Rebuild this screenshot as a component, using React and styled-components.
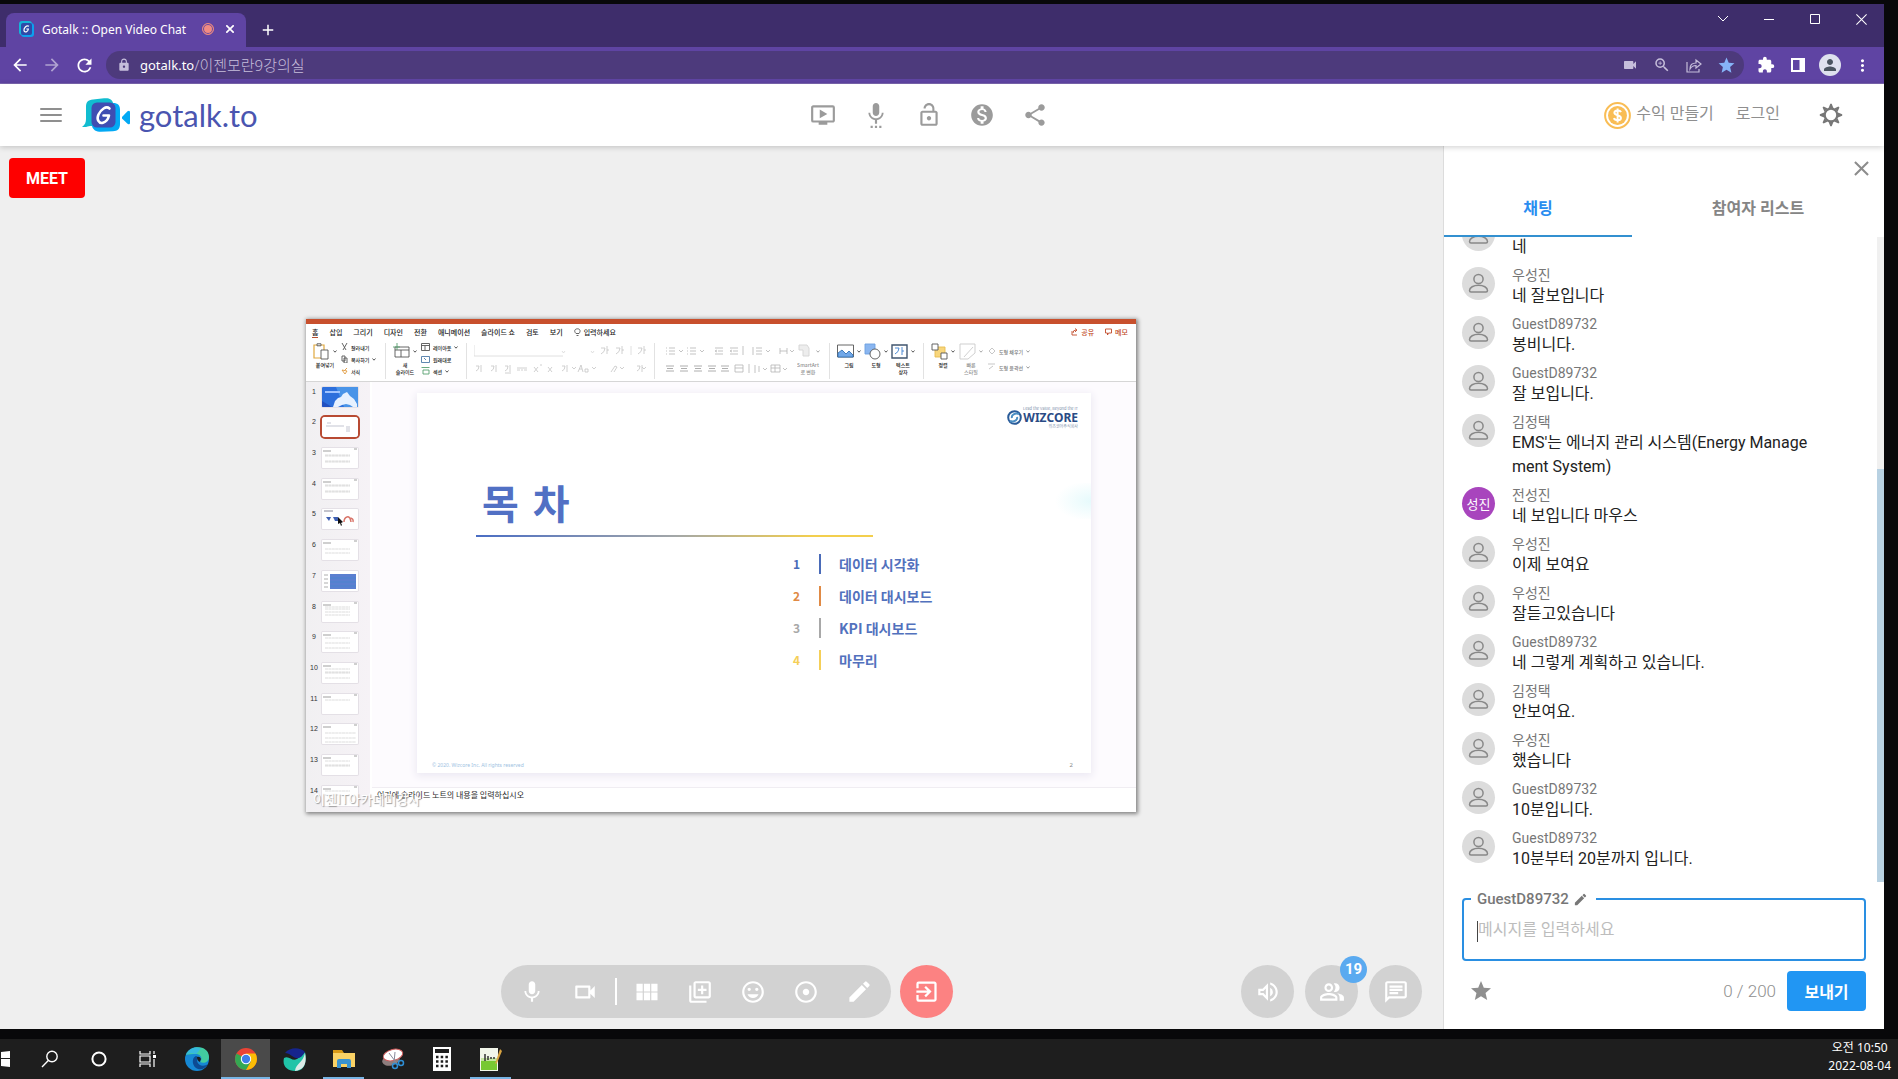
import React from "react";
import styled, { createGlobalStyle } from "styled-components";
import {
  MdOndemandVideo, MdSettingsVoice, MdLockOpen, MdMonetizationOn, MdShare, MdMic, MdOutlineVideocam,
  MdViewModule, MdOutlineLibraryAdd, MdOutlineInsertEmoticon, MdAdjust, MdEdit, MdExitToApp,
  MdOutlineVolumeUp, MdOutlinePeopleAlt, MdOutlineChat, MdStar, MdVideocam, MdZoomIn, MdExtension,
  MdMoreVert, MdArrowBack, MdArrowForward, MdRefresh, MdLock, MdPerson, MdClose, MdAdd,
} from "react-icons/md";

const Global = createGlobalStyle`
  * { box-sizing: border-box; }
  body { margin: 0; background: #08080a; font-family: Roboto, "Noto Sans CJK KR", sans-serif; }
  button { border: 0; padding: 0; background: none; font: inherit; color: inherit; cursor: pointer; }
  input, textarea { font: inherit; }
  svg { display: block; flex: none; }
  h1, p, ul, ol { margin: 0; padding: 0; list-style: none; }
`;

const Desktop = styled.div`
  height: 100vh;
  display: flex;
  flex-direction: column;
  background: #08080a;
  overflow: hidden;
`;
const BrowserWindow = styled.div`
  flex: 1;
  min-height: 0;
  margin: 4px 14px 10px 0;
  display: flex;
  flex-direction: column;
  background: #efefef;
`;

/* ---------- browser chrome ---------- */
const TabStrip = styled.div`
  height: 43px;
  display: flex;
  align-items: flex-end;
  padding-left: 6px;
  background: #3e2d6b;
  color: #fff;
  font-family: "Noto Sans", "Noto Sans CJK KR", sans-serif;
`;
const BrowserTab = styled.div`
  width: 240px;
  height: 34px;
  display: flex;
  align-items: center;
  padding: 0 8px 2px 12px;
  border-radius: 8px 8px 0 0;
  background: #5f44a3;
  font-size: 12px;
`;
const TabTitle = styled.span`
  flex: 1;
  padding-left: 8px;
  white-space: nowrap;
`;
const RecordDot = styled.span`
  width: 12px;
  height: 12px;
  margin-right: 8px;
  border-radius: 50%;
  border: 1px solid #e8877f;
  background: #f28b82;
  box-shadow: inset 0 0 0 1px #5f44a3;
`;
const TabButton = styled.button`
  width: 16px;
  height: 34px;
  display: grid;
  place-items: center;
`;
const NewTab = styled(TabButton)`
  width: 44px;
`;
const WindowControls = styled.div`
  align-self: flex-start;
  margin-left: auto;
  display: flex;
`;
const WindowButton = styled.button`
  width: 46px;
  height: 30px;
  display: grid;
  place-items: center;
`;
const AddressRow = styled.div`
  height: 37px;
  display: flex;
  align-items: center;
  padding: 0 6px 0 4px;
  background: #5f44a3;
  border-bottom: 1px solid #7d68b3;
  color: #fff;
`;
const ChromeButton = styled.button`
  width: 32px;
  height: 32px;
  display: grid;
  place-items: center;
  opacity: ${(p) => (p.$dim ? 0.5 : 1)};
  color: ${(p) => p.$color || "inherit"};
`;
const AddressBar = styled.div`
  flex: 1;
  height: 28px;
  margin: 0 6px;
  padding: 0 2px 0 11px;
  display: flex;
  align-items: center;
  border-radius: 14px;
  background: #4d3a7c;
  color: #c6bedb;
  font-family: "Noto Sans", "Noto Sans CJK KR", sans-serif;
  font-size: 13px;
`;
const AddressHost = styled.label`
  padding-left: 9px;
  color: #fff;
`;
const AddressInput = styled.input`
  flex: 1;
  min-width: 0;
  height: 26px;
  padding: 0 0 2px;
  border: 0;
  outline: 0;
  background: none;
  color: #c6bedb;
  font-size: 15px;
  font-weight: 300;
`;
const Profile = styled.span`
  width: 22px;
  height: 22px;
  display: grid;
  place-items: center;
  border-radius: 50%;
  background: #dee1ee;
  color: #4a5560;
`;

/* ---------- site header ---------- */
const SiteHeader = styled.header`
  height: 62px;
  flex: none;
  display: grid;
  grid-template-columns: 1fr auto 1fr;
  align-items: center;
  padding: 0 35px 0 40px;
  background: #fff;
  box-shadow: 0 1px 6px rgba(0, 0, 0, 0.2);
  z-index: 1;
`;
const HeaderLeft = styled.div`
  display: flex;
  align-items: center;
  gap: 20px;
`;
const Brand = styled.a`
  display: flex;
  align-items: center;
  gap: 9px;
  color: #4a55b0;
  font: 400 31px/40px Lato, sans-serif;
  text-decoration: none;
`;
const HeaderTools = styled.nav`
  display: flex;
  margin-right: 32px;
  color: #9b9b9b;
`;
const ToolButton = styled.button`
  width: 53px;
  height: 53px;
  display: grid;
  place-items: center;
`;
const HeaderRight = styled.div`
  display: flex;
  align-items: center;
  justify-content: flex-end;
  padding-right: 6px;
  color: #8f8f8f;
  font-size: 16px;
  line-height: 24px;
`;
const HeaderLink = styled.a`
  display: flex;
  align-items: center;
  gap: 5px;
  margin-right: ${(p) => p.$space}px;
  color: inherit;
  text-decoration: none;
`;
const LinkLabel = styled.span`
  padding-bottom: 3px;
`;

/* ---------- meeting stage ---------- */
const Content = styled.div`
  flex: 1;
  min-height: 0;
  display: flex;
`;
const Stage = styled.main`
  flex: 1;
  min-width: 0;
  display: flex;
  flex-direction: column;
  padding: 12px 21px 11px 9px;
  background: #efefef;
`;
const MeetButton = styled.button`
  align-self: flex-start;
  width: 76px;
  height: 40px;
  border-radius: 4px;
  background: #fe0000;
  color: #fff;
  font-size: 16px;
  font-weight: 700;
`;
const ScreenArea = styled.div`
  flex: 1;
  min-height: 0;
  display: flex;
  align-items: center;
  justify-content: center;
  padding: 0 0 33px 11px;
`;
const Screen = styled.section`
  position: relative;
  width: 830px;
  height: 493px;
  display: flex;
  flex-direction: column;
  border-top: 5px solid #c8502d;
  background: #fff;
  box-shadow: 1px 1px 4px 1px rgba(0, 0, 0, 0.45);
  color: #222;
  font-family: "Noto Sans CJK KR", sans-serif;
`;
const StageBar = styled.div`
  display: grid;
  grid-template-columns: 1fr auto 1fr;
  align-items: center;
`;
const CallControls = styled.div`
  grid-column: 2;
  display: flex;
  gap: 9px;
  padding-left: 22px;
`;
const ControlPill = styled.div`
  display: flex;
  align-items: center;
  padding: 0 5px;
  border-radius: 27px;
  background: #d2d2d2;
  color: #fff;
`;
const PillDivider = styled.span`
  width: 2px;
  height: 27px;
  margin: 0 4px 0 3px;
  background: #fff;
`;
const RoundButton = styled.button`
  position: relative;
  width: 53px;
  height: 53px;
  display: grid;
  place-items: center;
  border-radius: 50%;
  background: ${(p) => p.$color || "#d2d2d2"};
  color: #fff;
`;
const Badge = styled.span`
  position: absolute;
  right: -9px;
  top: -9px;
  width: 27px;
  height: 27px;
  border-radius: 50%;
  background: #5aaaf0;
  font-size: 15px;
  font-weight: 700;
  line-height: 27px;
`;
const StageActions = styled.div`
  justify-self: end;
  display: flex;
  gap: 11px;
`;

/* ---------- shared presentation ---------- */
const RibbonTabs = styled.div`
  height: 18px;
  flex: none;
  display: flex;
  align-items: flex-start;
  gap: 11px;
  padding: 3px 8px 0 6px;
  font-size: 7px;
  font-weight: 500;
  line-height: 10px;
`;
const RibbonTab = styled.span`
  display: flex;
  align-items: center;
  gap: 3px;
  border-bottom: 1px solid ${(p) => (p.$on ? "#b5502f" : "transparent")};
  color: ${(p) => p.$color || "inherit"};
  margin-left: ${(p) => (p.$push ? "auto" : 0)};
`;
const Ribbon = styled.div`
  height: 40px;
  flex: none;
  display: flex;
  align-items: center;
  border-bottom: 1px solid #d6d6d6;
  font-size: 5px;
  font-weight: 500;
  line-height: 7px;
`;
const RibbonGroup = styled.div`
  width: ${(p) => p.$w}px;
  height: 36px;
  display: flex;
  gap: ${(p) => p.$gap || 8}px;
  padding: 0 0 4px ${(p) => p.$pad || 7}px;
  border-right: 1px solid ${(p) => (p.$last ? "transparent" : "#e2e2e2")};
`;
const BigTool = styled.div`
  display: flex;
  flex-direction: column;
  align-items: center;
  gap: 1px;
  text-align: center;
  white-space: pre;
  opacity: ${(p) => (p.$off ? 0.5 : 1)};
`;
const SmallTools = styled.div`
  display: flex;
  flex-direction: column;
  justify-content: ${(p) => (p.$spread ? "space-around" : "space-between")};
`;
const SmallTool = styled.span`
  display: flex;
  align-items: center;
  gap: 3px;
  white-space: nowrap;
  opacity: ${(p) => (p.$off ? 0.6 : 1)};
`;
const DeckBody = styled.div`
  flex: 1;
  min-height: 0;
  display: flex;
`;
const ThumbList = styled.ol`
  width: 66px;
  display: flex;
  flex-direction: column;
  overflow: hidden;
  background: linear-gradient(90deg, #f1f0f2, #f6f2f6);
  border-right: 2px solid #fff;
`;
const ThumbRow = styled.li`
  flex: 1;
  display: flex;
  align-items: flex-start;
  padding-top: 5px;
  font: 7px/9px "Liberation Sans", sans-serif;
`;
const ThumbNumber = styled.span`
  width: 16px;
  text-align: center;
  color: #333;
`;
const ThumbFrame = styled.span`
  border-radius: ${(p) => (p.$on ? 3 : 1)}px;
  box-shadow: 0 0 0 ${(p) => (p.$on ? "2px #b84a32" : "1px #e4e0e6")};
  overflow: hidden;
`;
const DeckMain = styled.div`
  flex: 1;
  display: flex;
  flex-direction: column;
  background: #fdfbfe;
`;
const SlideArea = styled.div`
  flex: 1;
  padding: 11px 45px 14px;
  display: flex;
`;
const Slide = styled.article`
  flex: 1;
  display: flex;
  flex-direction: column;
  padding: 13px 0 0;
  background: radial-gradient(ellipse 36px 20px at 100% 50%, #e6fafc, #fff) right 90px / 36px 36px no-repeat, #fff;
  box-shadow: 0 2px 8px 1px #ebe8f2;
`;
const WizLogo = styled.div`
  align-self: flex-end;
  margin-right: 13px;
  display: flex;
  align-items: center;
  gap: 1px;
  color: #2a4b85;
`;
const WizText = styled.div`
  display: flex;
  flex-direction: column;
  align-items: flex-end;
  color: #8191ac;
  font: 400 4px/5px "Noto Sans CJK KR", sans-serif;
`;
const WizName = styled.strong`
  color: #2a4b85;
  font: 700 12px/13px "Noto Sans", sans-serif;
`;
const SlideTitle = styled.h1`
  margin: 46px 0 0 65px;
  color: #5170c4;
  font: 700 40px/60px "DejaVu Sans", "Noto Sans CJK KR", sans-serif;
`;
const TitleRule = styled.span`
  width: 397px;
  height: 2px;
  margin: 0 0 11px 59px;
  background: linear-gradient(90deg, #4a6dc4, #a3a7a8 50%, #f3cf4e 85%);
`;
const Agenda = styled.ol`
  margin-left: 376px;
`;
const AgendaRow = styled.li`
  height: 32px;
  display: flex;
  align-items: center;
  color: #5271bd;
  font-size: 14px;
  font-weight: 700;
  line-height: 20px;
`;
const AgendaNumber = styled.span`
  width: 26px;
  color: ${(p) => p.$color};
  font-size: 12px;
`;
const AgendaMark = styled.span`
  width: 2px;
  height: 20px;
  margin-right: 18px;
  background: ${(p) => p.$color};
`;
const SlideFooter = styled.footer`
  margin-top: auto;
  padding: 0 18px 3px 15px;
  display: flex;
  justify-content: space-between;
  color: #9dbfdf;
  font: 5px/10px "Noto Sans", sans-serif;
`;
const PageNumber = styled.span`
  color: #8a8a8a;
  font-size: 6px;
`;
const Notes = styled.p`
  height: 25px;
  padding: 1px 5px;
  border-top: 1px solid #f0edf2;
  background: #fff;
  color: #2a2a2a;
  font-size: 8px;
  line-height: 12px;
`;
const Watermark = styled.span`
  position: absolute;
  left: 7px;
  bottom: 4px;
  color: #fff;
  font-size: 13px;
  line-height: 18px;
  text-shadow: 1px 1px 1px #999;
`;

/* ---------- chat panel ---------- */
const ChatPanel = styled.aside`
  width: 441px;
  flex: none;
  display: flex;
  flex-direction: column;
  border-left: 1px solid #dcdcdc;
  background: #fff;
`;
const PanelTop = styled.div`
  display: flex;
  justify-content: flex-end;
  padding: 10px 11px 0;
  height: 32px;
  color: #8c8c8c;
`;
const CloseButton = styled.button`
  width: 24px;
  height: 24px;
  display: grid;
  place-items: center;
`;
const PanelTabs = styled.div`
  display: grid;
  grid-template-columns: 188px 1fr;
`;
const PanelTab = styled.button`
  height: 59px;
  border-bottom: 2px solid ${(p) => (p.$on ? "#3390d0" : "transparent")};
  color: ${(p) => (p.$on ? "#2a8df0" : "#858585")};
  font-size: 16px;
  font-weight: 700;
`;
const MessagesWrap = styled.div`
  flex: 1;
  min-height: 0;
  display: flex;
`;
const Messages = styled.ul`
  flex: 1;
  min-width: 0;
  display: flex;
  flex-direction: column;
  justify-content: flex-end;
  gap: 9px;
  padding: 0 62px 12px 18px;
  overflow: hidden;
`;
const Message = styled.li`
  flex: none;
  display: flex;
  align-items: flex-start;
  gap: 17px;
`;
const Avatar = styled.span`
  width: 33px;
  height: 33px;
  flex: none;
  display: grid;
  place-items: center;
  border-radius: 50%;
  background: ${(p) => (p.$filled ? "#a845bd" : "#dcdcdc")};
  color: ${(p) => (p.$filled ? "#fff" : "#888")};
  font-size: 13px;
`;
const Sender = styled.div`
  color: #777;
  font-size: 14px;
  line-height: 17px;
`;
const MessageText = styled.div`
  margin-bottom: -1px;
  color: #222;
  font-size: 16px;
  line-height: 24px;
  word-break: break-all;
`;
const ScrollTrack = styled.div`
  width: 7px;
  display: flex;
  align-items: flex-end;
  background: #f0f0f0;
`;
const ScrollThumb = styled.span`
  width: 7px;
  height: 64%;
  background: #b8d1e2;
`;
const Composer = styled.form`
  padding: 5px 18px 18px;
`;
const MessageField = styled.fieldset`
  height: 74px;
  min-width: 0;
  margin: 0;
  padding: 0 13px 4px;
  border: 2px solid #2a8fe2;
  border-radius: 4px;
`;
const FieldLegend = styled.legend`
  margin-left: -6px;
  padding: 0 8px 0 6px;
  color: #777;
  font-size: 15px;
  font-weight: 500;
  line-height: 24px;
`;
const LegendRow = styled.span`
  display: flex;
  align-items: center;
  gap: 4px;
`;
const FieldRow = styled.div`
  display: flex;
  align-items: center;
  padding-top: 8px;
`;
const Caret = styled.span`
  width: 1px;
  height: 21px;
  background: #444;
`;
const MessageInput = styled.textarea`
  flex: 1;
  height: 24px;
  padding: 0;
  border: 0;
  outline: 0;
  resize: none;
  background: none;
  font-size: 16px;
  line-height: 22px;
  overflow: hidden;
  &::placeholder { color: #bdbdbd; }
`;
const ComposerRow = styled.div`
  display: flex;
  align-items: center;
  gap: 11px;
  padding: 10px 0 0 7px;
  color: #8f8f8f;
`;
const Counter = styled.span`
  margin-left: auto;
  font-size: 17px;
  font-weight: 300;
`;
const SendButton = styled.button`
  width: 79px;
  height: 40px;
  border-radius: 4px;
  background: #2196f3;
  color: #fff;
  font-size: 16px;
  font-weight: 700;
`;

/* ---------- taskbar ---------- */
const Taskbar = styled.footer`
  height: 40px;
  flex: none;
  display: flex;
  padding-right: 7px;
  background: #1e1e1e;
  color: #fff;
`;
const TaskButton = styled.button`
  width: ${(p) => (p.$narrow ? 25 : 49)}px;
  height: 40px;
  display: grid;
  place-items: center;
  justify-content: ${(p) => (p.$narrow ? "start" : "center")};
  background: ${(p) => (p.$active ? "#4a4a4a" : "none")};
  box-shadow: ${(p) => (p.$open ? "inset 0 -2px #78b4e4" : "none")};
`;
const OpenTask = styled(TaskButton)`
  width: 41px;
  margin: 0 4px;
`;
const Clock = styled.time`
  margin-left: auto;
  display: flex;
  flex-direction: column;
  align-items: center;
  font: 12px/18px "Noto Sans", "Noto Sans CJK KR", sans-serif;
`;

/* ---------- drawings ---------- */
const Favicon = () => (
  <svg width="16" height="16" viewBox="0 0 16 16">
    <rect x="1" width="13" height="14" rx="3" fill="#14b5d8" />
    <rect x="3" y="2" width="13" height="14" rx="3" fill="#0da0ee" />
    <rect x="3" y="2" width="11" height="12" rx="2" fill="#2e4aa8" />
    <path d="M11 5.3C8.4 3.800 5.600 7.200 6 9.500c.6 2.600 4 1.400 4.400-1.500H8.300" fill="none" stroke="#fff" strokeWidth="1.200" />
  </svg>
);
const BrandMark = () => (
  <svg width="48" height="34" viewBox="0 0 48 34">
    <path d="M4 9c0-5 2-7 7-7.500L22 .3c5-.6 8 .7 9.500 5.700v22H8c-2 0-3 1.500-8 1 3-2 4-5 4-8z" fill="#11bcd0" />
    <path d="M14 5h17c5 0 7 2.500 7 7v14c0 5-2.500 7-7 7.300l-12 .5c-5 0-8-1.800-9-5.800z" fill="#03a9f4" />
    <rect x="9.500" y="4.500" width="24" height="25" rx="5.500" fill="#3f4db2" />
    <path d="M27.500 10.500c-3.500-3-8.500 1-11 6-2.300 5 .5 9.500 4.500 8.300 3.200-1 5.200-4 6-7.300h-5.500" fill="none" stroke="#fff" strokeWidth="2.600" strokeLinecap="round" strokeLinejoin="round" />
    <path d="M40 19l5.500-5.800q2.500-1.500 2.500 1v10.500q0 2.500-2.500 1L40 20.500z" fill="#03a9f4" />
  </svg>
);
const Hamburger = () => (
  <svg width="22" height="14" viewBox="0 0 22 14" stroke="#8f8f8f" strokeWidth="2" strokeLinecap="round">
    <path d="M1 1h20M1 7h20M1 13h20" />
  </svg>
);
const Gear = () => (
  <svg width="24" height="24" viewBox="-12 -12 24 24" fill="none" stroke="#777">
    <circle r="6.300" strokeWidth="2.200" />
    {[0, 45, 90, 135, 180, 225, 270, 315].map((a) => (
      <path key={a} d="M-2.400-6.900L-.7-11.200H.7L2.400-6.900z" fill="#777" stroke="none" transform={`rotate(${a})`} />
    ))}
  </svg>
);
const Coin = () => (
  <svg width="27" height="27" viewBox="0 0 27 27">
    <circle cx="13.500" cy="13.500" r="12.400" fill="#fff" stroke="#f9bd55" strokeWidth="2" />
    <circle cx="13.500" cy="13.500" r="9.500" fill="#f9bd55" />
    <path d="M17 10.200c-1-2.400-6.600-2.400-6.600.6 0 3.200 6.500 1.800 6.500 5.200 0 3-6 3-7 .2M13.600 6.500v14" fill="none" stroke="#fff" strokeWidth="2" />
  </svg>
);
const Person = () => (
  <svg width="21" height="21" viewBox="0 0 21 21" fill="none" stroke="currentColor" strokeWidth="1.500">
    <circle cx="10.500" cy="6" r="4.600" />
    <path d="M3 19h15c1 0 1.500-.5 1.500-1.500 0-3-4-5.200-9-5.200s-9 2.200-9 5.200c0 1 .5 1.500 1.500 1.500z" />
  </svg>
);
const Cross = ({ size = 14, w = 1.500 }) => (
  <svg width={size} height={size} viewBox="0 0 14 14" stroke="currentColor" strokeWidth={w}>
    <path d="M.5.5l13 13M13.500.5l-13 13" />
  </svg>
);
const Chevron = ({ color = "#444" }) => (
  <svg width="4" height="3" viewBox="0 0 4 3" fill="none" stroke={color} strokeWidth=".9"><path d="M.5.5L2 2.200 3.500.5" /></svg>
);
const Glyph = ({ w = 9, h = 8, children }) => (
  <svg width={w} height={h} viewBox={`0 0 ${w} ${h}`} fill="none" stroke="#555" strokeWidth=".9">{children}</svg>
);
const Swirl = () => (
  <svg width="15" height="15" viewBox="0 0 15 15" fill="none">
    <circle cx="7.500" cy="7.500" r="6.300" stroke="#2a5c9a" strokeWidth="2" />
    <path d="M12 4C8 2.500 4 5 5 8M3 11c4 1.500 8-1 7-4" stroke="#4b8fc4" strokeWidth="2" />
  </svg>
);
const FontTools = () => (
  <svg width="176" height="32" viewBox="0 0 176 32" fill="none" stroke="#c4c4c4" strokeWidth=".8">
    <path d="M0 2v11h89M117 8l1.500 2L120 8M88 8l1.500 2L91 8M157 3v9" stroke="#d8d8d8" />
    {[127, 142, 164].map((x) => <path key={x} d={`M${x} 5h4q0 4-4 6M${x + 6} 3v8m0-4h2`} />)}
    {[2, 17, 31, 88, 163].map((x) => <path key={x} d={`M${x} 23h3q0 4-3 5M${x + 5} 22v7`} />)}
    <path d="M31 30h6M43 25h10M43 27h3m1 0h2m1 0h3M60 24l4 5m0-5l-4 5M66 22h2M74 24l4 5m0-5l-4 5M98 24l2 2 2-2M104 29l3-7 2 7m-4-3h3m3 0h3v3h-3zM118 24l2 2 2-2M137 29l4-6 2 1-3 5M146 24l2 2 2-2M168 24l2 2 2-2" />
  </svg>
);
const ParagraphTools = () => (
  <svg width="132" height="32" viewBox="0 0 132 32" fill="none" stroke="#b4b4b4" strokeWidth=".8">
    {[3, 24].map((x) => <path key={x} d={`M${x} 5h1m2 0h6M${x} 8h1m2 0h6M${x} 11h1m2 0h6M${x + 13} 7l2 2 2-2`} />)}
    {[52, 67].map((x) => <path key={x} d={`M${x} 5h8m-5 3h5m-8 3h8M${x + 2} 7l-2 1 2 1`} />)}
    <path d="M80 3v9M90 4v8m3-7h6m-6 3h6m-6 3h6m4-4l2 2 2-2M117 8h7m0-3v6m-7-6v6m10-4l2 2 2-2" />
    {[3, 17, 31, 45, 58].map((x) => <path key={x} stroke="#999" d={`M${x} 23h8m-7 2.500h6m-7 2.500h8`} />)}
    <path d="M72 22h8v7h-8zm0 3h8M86 21v9M92 22v8m4-7v6m4-4l2 2 2-2M108 22h9v7h-9zm4 0v7m-4-4h9m3 0l2 2 2-2" />
  </svg>
);
const Thumb = ({ kind }) => {
  const rows = { 3: [7, 8, 13, 14], 4: [6, 7, 12, 13], 6: [9, 13], 8: [5, 7, 10, 13], 9: [6, 11, 16], 10: [6, 9, 10, 15], 11: [6], 12: [9, 14, 18], 13: [6, 10, 11], 14: [5, 9] }[kind] || [];
  return (
    <svg width="36" height="20" viewBox="0 0 36 20">
      <rect width="36" height="20" fill="#fff" />
      {kind === 1 && <>
        <rect width="36" height="20" fill="#2d6fdc" /><path d="M14 0h22v20H22z" fill="#4a94e8" />
        <path d="M0 14l10 6H0z" fill="#2250c0" />
        <path d="M11 20l2-6 3-3 3-1 2-3 4-2 3 4 4 3 3 5v3h-4l-3-2-4-1-4 1-4 2z" fill="#e7f1ff" /><path d="M3 5h15" stroke="#9fc3ff" strokeWidth="2" />
      </>}
      {kind === 2 && <path d="M5 6h4M4 9h18m2 1h4m-4 2h4m-4 2h4" stroke="#a9aebd" strokeWidth=".7" />}
      {kind === 5 && <>
        <path d="M2 2h9" stroke="#889" /><path d="M4 8h5l-2 4zm7 0h5v4h-3z" fill="#3e5fb2" />
        <path d="M22 13q0-4 3-5t4 5m-2-4q5 0 4 4" stroke="#d9756a" fill="none" strokeWidth="1.500" />
        <path d="M16 8v7l2-1 1 3 1-1-1-2 2-1z" fill="#111" />
      </>}
      {kind === 7 && <>
        <rect x="8" y="3" width="26" height="15" fill="#5b7fd0" />
        <path d="M8 7h26M8 11h26M8 15h26" stroke="#48c" strokeWidth=".6" /><path d="M2 4h4m-4 4h4m-4 4h4m-4 4h4" stroke="#999" strokeWidth=".8" />
      </>}
      {rows.length > 0 && <path d="M1 3h8M32 1h3" stroke="#777" strokeWidth=".7" />}
      {rows.map((y) => <path key={y} d={`M3 ${y}h${kind === 12 ? 31 : 25}`} stroke="#bbb" strokeWidth=".5" strokeDasharray="3 .4" />)}
    </svg>
  );
};

const tasks = {
  windows: <svg width="10" height="16" viewBox="0 0 10 16" fill="#fff"><path d="M1 1l9-1v7H1zM1 8h9v8l-9-1zM0 1v6zM0 8v6z" /></svg>,
  search: <svg width="18" height="18" viewBox="0 0 18 18" fill="none" stroke="#fff" strokeWidth="1.400"><circle cx="11" cy="6.500" r="5.200" /><path d="M7.300 10.500L1 17" /></svg>,
  cortana: <svg width="16" height="16" viewBox="0 0 16 16" fill="none" stroke="#fff" strokeWidth="2"><circle cx="8" cy="8" r="6.600" /></svg>,
  view: <svg width="17" height="16" viewBox="0 0 17 16" fill="none" stroke="#fff" strokeWidth="1.200"><path d="M1 0v3h10V0M1 5h10v6H1zM1 16v-3h10v3M15 0v3m0 5v8" /><path d="M14 4h3v3h-3z" fill="#fff" stroke="none" /></svg>,
  edge: <svg width="24" height="24" viewBox="0 0 24 24"><circle cx="12" cy="12" r="12" fill="#1688d4" /><path d="M1 8C5-3 24-2 24 10c0 5-5 7-9 5 3-3 1-8-4-8-4 0-8 0-10 1z" fill="#42cda0" /><path d="M1 8c3-7 10-9 15-6-3 2-3 4-5 5-4-1-8-1-10 1z" fill="#36b8df" /><path d="M11 9c-5 2-4 11 2 13 4 1 8-1 10-5-4 3-10 2-11-3 0-2 1-3 1-4z" fill="#0d4b93" /><path d="M12 10q3-1 4 2-1 2-1 3-3-1-3-5z" fill="#1e1e1e" /></svg>,
  chrome: <svg width="22" height="22" viewBox="0 0 22 22"><circle cx="11" cy="11" r="11" fill="#ea4335" /><path d="M1.500 5.500A11 11 0 0 0 11 22l5-8.500z" fill="#34a853" /><path d="M20.500 5.500H11l5 8L11 22A11 11 0 0 0 20.500 5.500z" fill="#fbbc05" /><circle cx="11" cy="11" r="5.200" fill="#fff" /><circle cx="11" cy="11" r="4.200" fill="#3f7ee8" /></svg>,
  whale: <svg width="23" height="23" viewBox="0 0 23 23"><path d="M1 10c5-3 8 4 13 1 3-2 5-4 8-7 2 12-1 19-10 19C4 23-1 18 1 10z" fill="#20c4a8" /><path d="M2 5C7-1 17-1 22 4c-3 5-6 7-9 6C9 9 7 5 2 5z" fill="#16258c" /><path d="M22 5c2 9 0 17-10 18 1-8 8-8 10-18z" fill="#dcebe8" /></svg>,
  folder: <svg width="22" height="18" viewBox="0 0 22 18"><path d="M0 0h9l2 3H0z" fill="#d99a17" /><path d="M0 3h22v14H0z" fill="#fad265" /><path d="M4 18v-7q0-2 2-2h10q2 0 2 2v7h-4v-4H8v4z" fill="#3a93cf" /></svg>,
  snip: <svg width="24" height="22" viewBox="0 0 24 22"><ellipse cx="10" cy="12" rx="9" ry="5.500" fill="#8d7d7d" transform="rotate(-15 10 12)" /><ellipse cx="12" cy="7" rx="10" ry="5.500" fill="#fff" stroke="#cf5c5c" transform="rotate(-15 12 7)" /><path d="M8 5l9 12M14 4l-1 11" stroke="#889" /><circle cx="14" cy="18" r="2.500" fill="none" stroke="#2f8fd6" strokeWidth="1.500" /><circle cx="20" cy="15" r="2.500" fill="none" stroke="#2f8fd6" strokeWidth="1.500" /></svg>,
  calc: <svg width="18" height="24" viewBox="0 0 18 24"><path d="M0 0h18v24H0z" fill="#fff" /><path d="M2 2h14v4H2z" fill="#1e1e1e" /><path d="M3 10h12M3 14.500h12M3 19h12" stroke="#1e1e1e" strokeWidth="2.500" strokeDasharray="2.500 2.200" /></svg>,
  note: <svg width="22" height="24" viewBox="0 0 22 24"><path d="M0 1h18v23H0z" fill="#f2f6ea" /><path d="M1 11h16v3H1z" fill="#c5e6a0" /><path d="M1 14h16v9H1z" fill="#78c832" /><path d="M5 7v7m3-5v4m2-2h2m1 0h2" stroke="#333" strokeWidth="1.500" /><path d="M20 2l2 2-5 12-2 1z" fill="#d9a441" /></svg>,
};

const messages = [
  ["우성진", "네"], ["우성진", "네 잘보입니다"], ["GuestD89732", "봉비니다."], ["GuestD89732", "잘 보입니다."],
  ["김정택", "EMS'는 에너지 관리 시스템(Energy Management System)"], ["전성진", "네 보입니다 마우스", "성진"],
  ["우성진", "이제 보여요"], ["우성진", "잘듣고있습니다"], ["GuestD89732", "네 그렇게 계획하고 있습니다."],
  ["김정택", "안보여요."], ["우성진", "했습니다"], ["GuestD89732", "10분입니다."], ["GuestD89732", "10분부터 20분까지 입니다."],
];
const agenda = [
  ["1", "데이터 시각화", "#4a6bb8"], ["2", "데이터 대시보드", "#e08a45"], ["3", "KPI 대시보드", "#a8a8a8"], ["4", "마무리", "#f5cf58"],
];

function Presentation() {
  return (
    <Screen aria-label="공유 화면">
      <RibbonTabs>
        {["홈", "삽입", "그리기", "디자인", "전환", "애니메이션", "슬라이드 쇼", "검토", "보기"].map((t) => (
          <RibbonTab key={t} $on={t === "홈"}>{t}</RibbonTab>
        ))}
        <RibbonTab><Glyph w={7}><path d="M2 5.500C-.5 3 1 .8 3.500.8S7 3 5 5.500zm.5 2h2" /></Glyph>입력하세요</RibbonTab>
        <RibbonTab $push $color="#c14a28"><Glyph w={7}><path d="M1 3v4h5M2 5q0-3 3-3M4 .5L6 2 4 4" stroke="#c14a28" /></Glyph>공유</RibbonTab>
        <RibbonTab $color="#c14a28"><Glyph w={7}><path d="M.5 1h6v4h-3l-1 2V5h-2z" stroke="#c14a28" /></Glyph>메모</RibbonTab>
      </RibbonTabs>
      <Ribbon>
        <RibbonGroup $w={80} $gap={4}>
          <BigTool>
            <SmallTool><Glyph w={17} h={17}><path d="M1 2h10v13H1z" stroke="#e0a83e" strokeWidth="1.200" /><path d="M4 .8h4v2H4zM8 7h7v9H8z" fill="#fff" /></Glyph><Chevron /></SmallTool>
            붙여넣기
          </BigTool>
          <SmallTools>
            <SmallTool><Glyph w={7}><path d="M1 0l4 7M6 0L2 7" /></Glyph>잘라내기</SmallTool>
            <SmallTool><Glyph w={7}><path d="M1 1h3v5H1zM3 3h3v5H3z" /></Glyph>복사하기<Chevron /></SmallTool>
            <SmallTool><Glyph w={7}><path d="M1 3l3 4 2-3zM4 3l2-2" stroke="#e09a3e" /></Glyph>서식</SmallTool>
          </SmallTools>
        </RibbonGroup>
        <RibbonGroup $w={81} $gap={4}>
          <BigTool>
            <SmallTool><Glyph w={17} h={17}><path d="M2 4h14v10H2zM2 7h14M8 7v7" /><path d="M4 0v7M0 4h7" stroke="#58a070" /></Glyph><Chevron /></SmallTool>
            {"새\n슬라이드"}
          </BigTool>
          <SmallTools>
            <SmallTool><Glyph><path d="M.5.5h8v7h-8zM.5 2.500h8M4 3v4" /></Glyph>레이아웃<Chevron /></SmallTool>
            <SmallTool><Glyph><path d="M.5 1.500h8v6h-8zM3 3l2 2" stroke="#4d7ba8" /></Glyph>원래대로</SmallTool>
            <SmallTool><Glyph><path d="M.5.5h8M2 3h6v4H2z" stroke="#58a070" /></Glyph>섹션<Chevron /></SmallTool>
          </SmallTools>
        </RibbonGroup>
        <RibbonGroup $w={188}><FontTools /></RibbonGroup>
        <RibbonGroup $w={175} $pad={8} $gap={1}>
          <ParagraphTools />
          <BigTool $off>
            <SmallTool><Glyph w={17} h={17}><path d="M3 2h8l2 3v8H7V7H3z" fill="#ddd" stroke="#aaa" /></Glyph><Chevron /></SmallTool>
            {"SmartArt\n로 변환"}
          </BigTool>
        </RibbonGroup>
        <RibbonGroup $w={94} $gap={3}>
          <BigTool>
            <SmallTool><Glyph w={17} h={17}><path d="M.5 2h16v12H.5z" /><path d="M1 10l4-3 4 4 3-3 4 4v2H1z" fill="#72a8e8" stroke="#3474b8" /></Glyph><Chevron /></SmallTool>
            그림
          </BigTool>
          <BigTool>
            <SmallTool><Glyph w={17} h={17}><path d="M1 1h10v10H1z" fill="#8ab6f0" stroke="#6c9fe0" /><circle cx="11" cy="11" r="5" fill="#fff" /></Glyph><Chevron /></SmallTool>
            도형
          </BigTool>
          <BigTool>
            <SmallTool><Glyph w={17} h={17}><path d="M1 2h15v13H1z" strokeWidth="1.400" stroke="#40566f" /><path d="M4 5h4q0 4-4 6M11 4v8m0-4h2" stroke="#3c80d0" /></Glyph><Chevron /></SmallTool>
            {"텍스트\n상자"}
          </BigTool>
        </RibbonGroup>
        <RibbonGroup $w={160} $gap={4} $last>
          <BigTool>
            <SmallTool><Glyph w={17} h={17}><path d="M4 4h10v10H4z" fill="#f8d67c" stroke="#e6bc50" /><path d="M1 1h6v6H1zM10 10h6v6h-6z" fill="#fff" /></Glyph><Chevron /></SmallTool>
            정렬
          </BigTool>
          <BigTool $off>
            <SmallTool><Glyph w={17} h={17}><path d="M1 1h15v9l-7 6H1zM5 14l9-10" stroke="#999" /></Glyph><Chevron /></SmallTool>
            {"빠른\n스타일"}
          </BigTool>
          <SmallTools $spread>
            <SmallTool $off><Glyph><path d="M2 4l3-3 3 3-3 3z" stroke="#999" /></Glyph>도형 채우기<Chevron /></SmallTool>
            <SmallTool $off><Glyph><path d="M1 1h7M2 6l4-3" stroke="#999" /></Glyph>도형 윤곽선<Chevron /></SmallTool>
          </SmallTools>
        </RibbonGroup>
      </Ribbon>
      <DeckBody>
        <ThumbList>
          {Array.from({ length: 14 }, (_, i) => i + 1).map((n) => (
            <ThumbRow key={n}><ThumbNumber>{n}</ThumbNumber><ThumbFrame $on={n === 2}><Thumb kind={n} /></ThumbFrame></ThumbRow>
          ))}
        </ThumbList>
        <DeckMain>
          <SlideArea>
            <Slide>
              <WizLogo>
                <Swirl />
                <WizText>
                  <span>Lead the Value, Beyond the IT</span>
                  <WizName>WIZCORE</WizName>
                  <span>위즈코어주식회사</span>
                </WizText>
              </WizLogo>
              <SlideTitle>목 차</SlideTitle>
              <TitleRule />
              <Agenda>
                {agenda.map(([n, t, c]) => (
                  <AgendaRow key={n}><AgendaNumber $color={c}>{n}</AgendaNumber><AgendaMark $color={c} />{t}</AgendaRow>
                ))}
              </Agenda>
              <SlideFooter><span>© 2020. Wizcore Inc. All rights reserved</span><PageNumber>2</PageNumber></SlideFooter>
            </Slide>
          </SlideArea>
          <Notes>여기에 슬라이드 노트의 내용을 입력하십시오</Notes>
        </DeckMain>
      </DeckBody>
      <Watermark>이젠IT아카데미강사</Watermark>
    </Screen>
  );
}

export default function App() {
  return (
    <Desktop>
      <Global />
      <BrowserWindow>
        <TabStrip>
          <BrowserTab>
            <Favicon />
            <TabTitle>Gotalk :: Open Video Chat</TabTitle>
            <RecordDot />
            <TabButton aria-label="탭 닫기"><Cross size={8} w={3} /></TabButton>
          </BrowserTab>
          <NewTab aria-label="새 탭"><MdAdd size={18} /></NewTab>
          <WindowControls>
            <WindowButton aria-label="탭 검색"><svg width="10" height="6" viewBox="0 0 10 6" fill="none" stroke="#fff"><path d="M0 0l5 5 5-5" /></svg></WindowButton>
            <WindowButton aria-label="최소화"><svg width="10" height="1"><path d="M0 .5h10" stroke="#fff" /></svg></WindowButton>
            <WindowButton aria-label="최대화"><svg width="10" height="10" fill="none" stroke="#fff"><path d="M.5.5h9v9h-9z" /></svg></WindowButton>
            <WindowButton aria-label="닫기"><Cross size={11} w={1.300} /></WindowButton>
          </WindowControls>
        </TabStrip>
        <AddressRow>
          <ChromeButton aria-label="뒤로"><MdArrowBack size={20} /></ChromeButton>
          <ChromeButton $dim aria-label="앞으로"><MdArrowForward size={20} /></ChromeButton>
          <ChromeButton aria-label="새로고침"><MdRefresh size={21} /></ChromeButton>
          <AddressBar>
            <MdLock size={14} />
            <AddressHost htmlFor="address">gotalk.to</AddressHost>
            <AddressInput id="address" defaultValue="/이젠모란9강의실" />
            <ChromeButton aria-label="카메라"><MdVideocam size={16} /></ChromeButton>
            <ChromeButton aria-label="확대"><MdZoomIn size={18} /></ChromeButton>
            <ChromeButton aria-label="공유">
              <svg width="16" height="15" viewBox="0 0 16 15" fill="none" stroke="currentColor" strokeWidth="1.200"><path d="M1 4v10h12v-3M4 11q0-6 6-6V2l5 4-5 4V7.500Q6 7.500 4 11z" /></svg>
            </ChromeButton>
            <ChromeButton $color="#86b4f8" aria-label="북마크"><MdStar size={19} /></ChromeButton>
          </AddressBar>
          <ChromeButton aria-label="확장 프로그램"><MdExtension size={18} /></ChromeButton>
          <ChromeButton aria-label="사이드 패널"><svg width="14" height="14" fill="none" stroke="#fff" strokeWidth="2"><path d="M1 1h12v12H1z" /><path d="M11 1v12" strokeWidth="5" /></svg></ChromeButton>
          <ChromeButton aria-label="프로필"><Profile><MdPerson size={18} /></Profile></ChromeButton>
          <ChromeButton aria-label="메뉴"><MdMoreVert size={19} /></ChromeButton>
        </AddressRow>

        <SiteHeader>
          <HeaderLeft>
            <button aria-label="메뉴 열기"><Hamburger /></button>
            <Brand href="#"><BrandMark />gotalk.to</Brand>
          </HeaderLeft>
          <HeaderTools>
            {[MdOndemandVideo, MdSettingsVoice, MdLockOpen, MdMonetizationOn, MdShare].map((Icon, i) => (
              <ToolButton key={i} aria-label={["화면", "음성", "잠금", "후원", "공유"][i]}><Icon size={26} /></ToolButton>
            ))}
          </HeaderTools>
          <HeaderRight>
            <HeaderLink href="#" $space={22}><Coin /><LinkLabel>수익 만들기</LinkLabel></HeaderLink>
            <HeaderLink href="#" $space={39}><LinkLabel>로그인</LinkLabel></HeaderLink>
            <button aria-label="설정"><Gear /></button>
          </HeaderRight>
        </SiteHeader>

        <Content>
          <Stage>
            <MeetButton>MEET</MeetButton>
            <ScreenArea><Presentation /></ScreenArea>
            <StageBar>
              <CallControls>
                <ControlPill>
                  <ToolButton aria-label="마이크"><MdMic size={26} /></ToolButton>
                  <ToolButton aria-label="카메라"><MdOutlineVideocam size={26} /></ToolButton>
                  <PillDivider />
                  <ToolButton aria-label="레이아웃"><MdViewModule size={28} /></ToolButton>
                  <ToolButton aria-label="추가"><MdOutlineLibraryAdd size={26} /></ToolButton>
                  <ToolButton aria-label="이모티콘"><MdOutlineInsertEmoticon size={26} /></ToolButton>
                  <ToolButton aria-label="녹화"><MdAdjust size={26} /></ToolButton>
                  <ToolButton aria-label="그리기"><MdEdit size={27} /></ToolButton>
                </ControlPill>
                <RoundButton $color="#fc8282" aria-label="나가기"><MdExitToApp size={27} /></RoundButton>
              </CallControls>
              <StageActions>
                <RoundButton aria-label="소리"><MdOutlineVolumeUp size={26} /></RoundButton>
                <RoundButton aria-label="참여자"><MdOutlinePeopleAlt size={26} /><Badge>19</Badge></RoundButton>
                <RoundButton aria-label="채팅"><MdOutlineChat size={26} /></RoundButton>
              </StageActions>
            </StageBar>
          </Stage>

          <ChatPanel>
            <PanelTop><CloseButton aria-label="패널 닫기"><MdClose size={25} /></CloseButton></PanelTop>
            <PanelTabs>
              <PanelTab $on>채팅</PanelTab>
              <PanelTab>참여자 리스트</PanelTab>
            </PanelTabs>
            <MessagesWrap>
              <Messages>
                {messages.map(([name, text, initials], i) => (
                  <Message key={i}>
                    <Avatar $filled={!!initials}>{initials || <Person />}</Avatar>
                    <div><Sender>{name}</Sender><MessageText>{text}</MessageText></div>
                  </Message>
                ))}
              </Messages>
              <ScrollTrack><ScrollThumb /></ScrollTrack>
            </MessagesWrap>
            <Composer>
              <MessageField>
                <FieldLegend><LegendRow>GuestD89732<MdEdit size={15} /></LegendRow></FieldLegend>
                <FieldRow>
                  <Caret />
                  <MessageInput aria-label="메시지" placeholder="메시지를 입력하세요" />
                </FieldRow>
              </MessageField>
              <ComposerRow>
                <button type="button" aria-label="즐겨찾기"><MdStar size={24} /></button>
                <Counter>0 / 200</Counter>
                <SendButton type="button">보내기</SendButton>
              </ComposerRow>
            </Composer>
          </ChatPanel>
        </Content>
      </BrowserWindow>

      <Taskbar>
        <TaskButton $narrow aria-label="시작">{tasks.windows}</TaskButton>
        <TaskButton aria-label="검색">{tasks.search}</TaskButton>
        <TaskButton aria-label="코타나">{tasks.cortana}</TaskButton>
        <TaskButton aria-label="작업 보기">{tasks.view}</TaskButton>
        <TaskButton aria-label="엣지">{tasks.edge}</TaskButton>
        <TaskButton $active $open aria-label="크롬">{tasks.chrome}</TaskButton>
        <TaskButton aria-label="웨일">{tasks.whale}</TaskButton>
        <OpenTask $open aria-label="탐색기">{tasks.folder}</OpenTask>
        <TaskButton aria-label="캡처">{tasks.snip}</TaskButton>
        <TaskButton aria-label="계산기">{tasks.calc}</TaskButton>
        <OpenTask $open aria-label="메모장">{tasks.note}</OpenTask>
        <Clock><span>오전 10:50</span><span>2022-08-04</span></Clock>
      </Taskbar>
    </Desktop>
  );
}
